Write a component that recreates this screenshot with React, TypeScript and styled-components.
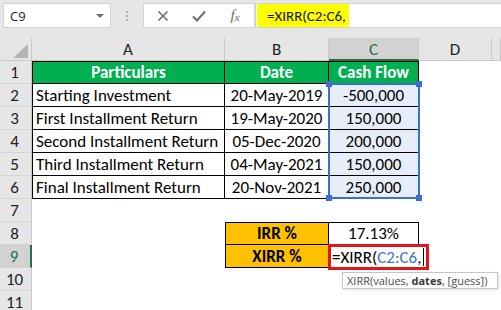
import React from 'react';
import styled, { createGlobalStyle } from 'styled-components';

const cellFont = `Calibri, Carlito, "Open Sans", "Liberation Sans", sans-serif`;
const uiFont = `"Segoe UI", "Open Sans", "Noto Sans", sans-serif`;

const GlobalStyle = createGlobalStyle`
    * { box-sizing: border-box; }
    html, body {
        margin: 0;
        padding: 0;
        background: #ffffff;
    }
    body {
        width: 501px;
        height: 310px;
        overflow: hidden;
    }
`

const Toolbar = styled.div`
    display: flex;
    align-items: flex-start;
    height: 38px;
    padding: 3px 0 0 3px;
    background: #e6e6e6;
`
const NameBox = styled.div`
    width: 108px;
    height: 25px;
    display: flex;
    align-items: center;
    justify-content: space-between;
    padding: 0 6px;
    background: #ffffff;
    border: 1px solid #d4d4d4;
    font-family: ${uiFont};
    font-size: 13px;
    color: #222;
`
const DropArrow = styled.span`
    width: 0;
    height: 0;
    border-left: 4px solid transparent;
    border-right: 4px solid transparent;
    border-top: 4px solid #707070;
`
const Grip = styled.div`
    width: 32px;
    height: 25px;
    display: flex;
    flex-direction: column;
    align-items: center;
    justify-content: center;
    gap: 2px;

    span {
        width: 2px;
        height: 2px;
        background: #b0b0b0;
    }
`
const FxButtons = styled.div`
    width: 112px;
    height: 25px;
    display: flex;
    align-items: center;
    gap: 22px;
    padding-left: 12px;
    background: #ffffff;
    border: 1px solid #d4d4d4;
    color: #6d6d6d;
`
const IconSlot = styled.span`
    width: 14px;
    display: flex;
    justify-content: center;
    align-items: center;
`
const FxLabel = styled.span`
    font-family: "Liberation Serif", serif;
    font-style: italic;
    font-size: 15px;
    color: #6d6d6d;

    sub {
        font-size: 11px;
        vertical-align: -1px;
    }
`
const FormulaInput = styled.div`
    flex: 1;
    height: 25px;
    padding-left: 1px;
    background: #ffffff;
    border: 1px solid #d4d4d4;
    border-right: none;
    display: flex;
`
const Highlight = styled.div`
    width: 92px;
    height: 100%;
    padding-left: 10px;
    display: flex;
    align-items: center;
    background: #ffff00;
    font-family: ${cellFont};
    font-size: 15px;
    color: #111;
`

const Sheet = styled.div`
    display: grid;
    grid-template-columns: 32px 193px 104px 90px 73px 1fr;
    grid-auto-rows: 23px;
    font-family: ${cellFont};
    font-size: 17px;
    color: #000;
`
const Corner = styled.div`
    position: relative;
    background: #e6e6e6;
    border-right: 1px solid #c8c8c8;
    border-bottom: 1px solid #c8c8c8;

    &::after {
        content: '';
        position: absolute;
        left: 13px;
        top: 6px;
        width: 15px;
        height: 14px;
        background: #b5b5b5;
        clip-path: polygon(100% 0, 100% 100%, 0 100%);
    }
`
const ColHead = styled.div<{ $selected?: boolean }>`
    display: flex;
    align-items: center;
    justify-content: center;
    background: ${p => (p.$selected ? '#d2d2d2' : '#e6e6e6')};
    border-right: 1px solid #c8c8c8;
    border-bottom: ${p => (p.$selected ? '2px solid #217346' : '1px solid #c8c8c8')};
    color: ${p => (p.$selected ? '#1f6b45' : '#222')};
    padding-top: ${p => (p.$selected ? '1px' : '0')};
`
const RowHead = styled.div<{ $selected?: boolean }>`
    display: flex;
    align-items: center;
    justify-content: center;
    padding-right: 2px;
    background: ${p => (p.$selected ? '#d2d2d2' : '#e6e6e6')};
    border-right: ${p => (p.$selected ? '2px solid #217346' : '1px solid #c8c8c8')};
    border-bottom: 1px solid #d4d4d4;
    color: ${p => (p.$selected ? '#1f6b45' : '#222')};
`
const Cell = styled.div<{
    $fill?: string;
    $align?: 'left' | 'center';
    $bold?: boolean;
    $ink?: string;
    $boxed?: boolean;
    $top?: boolean;
    $left?: boolean;
}>`
    position: relative;
    display: flex;
    align-items: center;
    justify-content: ${p => (p.$align === 'left' ? 'flex-start' : 'center')};
    padding: ${p => (p.$align === 'left' ? '0 0 0 3px' : '0')};
    white-space: nowrap;
    background: ${p => p.$fill || '#ffffff'};
    font-weight: ${p => (p.$bold ? 700 : 400)};
    color: ${p => p.$ink || '#000'};
    border-right: ${p => (p.$boxed ? '1px solid #000' : 'none')};
    border-bottom: ${p => (p.$boxed ? '1px solid #000' : 'none')};
    border-top: ${p => (p.$top ? '1px solid #000' : 'none')};
    border-left: ${p => (p.$left ? '1px solid #000' : 'none')};
`
// overlay drawn from the first cell of the referenced range, spans $rows rows
const RangeFrame = styled.div<{ $rows: number }>`
    position: absolute;
    left: -1px;
    top: -1px;
    width: 92px;
    height: ${p => p.$rows * 23 + 1}px;
    z-index: 1;
    border: 2px solid #3b6fcb;
    pointer-events: none;
`
const Handle = styled.span<{ $x: 'left' | 'right'; $y: 'top' | 'bottom' }>`
    position: absolute;
    width: 6px;
    height: 6px;
    background: #3b6fcb;
    ${p => p.$x}: -4px;
    ${p => p.$y}: -4px;
`
const EditCell = styled.div`
    position: relative;
    border-right: 1px solid #000;
    border-bottom: 1px solid #000;
`
const EditBox = styled.div`
    position: absolute;
    left: -1px;
    top: -1px;
    width: 101px;
    height: 26px;
    z-index: 2;
    display: flex;
    align-items: center;
    padding-left: 1px;
    background: #ffffff;
    border: 3px solid #e4141b;
    white-space: nowrap;
`
const Ref = styled.span`
    color: #3a75d0;
`
const Caret = styled.span`
    display: inline-block;
    width: 1px;
    height: 18px;
    margin-left: 2px;
    background: #000;
`
const Tooltip = styled.div`
    position: absolute;
    left: 13px;
    top: 27px;
    width: 156px;
    height: 17px;
    z-index: 3;
    display: flex;
    align-items: center;
    padding-left: 4px;
    background: #ffffff;
    border: 1px solid #c6c6c6;
    box-shadow: 1px 1px 2px rgba(0, 0, 0, 0.12);
    font-family: ${uiFont};
    font-size: 11px;
    color: #4a4a4a;
    white-space: nowrap;

    b {
        font-weight: 700;
        color: #3a3a3a;
    }
`

const rows = [
    ['Starting Investment', '20-May-2019', '-500,000'],
    ['First Installment Return', '19-May-2020', '150,000'],
    ['Second Installment Return', '05-Dec-2020', '200,000'],
    ['Third Installment Return', '04-May-2021', '150,000'],
    ['Final Installment Return', '20-Nov-2021', '250,000'],
];

const green = '#00b050';
const gold = '#ffc000';

const CrossIcon = () => (
    <svg width="12" height="12" viewBox="0 0 12 12">
        <path d="M1.5 1.5 L10.5 10.5 M10.5 1.5 L1.5 10.5" stroke="#6d6d6d" strokeWidth="1.6" fill="none" />
    </svg>
);

const CheckIcon = () => (
    <svg width="14" height="12" viewBox="0 0 14 12">
        <path d="M1 6.5 L5 10.5 L13 1.5" stroke="#6d6d6d" strokeWidth="2" fill="none" />
    </svg>
);

const EmptyRow: React.FC<{ n: number }> = ({ n }) => (
    <>
        <RowHead>{n}</RowHead>
        <Cell />
        <Cell />
        <Cell />
        <Cell />
        <Cell />
    </>
);

const App: React.FC = () => {
    return (
        <>
            <GlobalStyle />
            <Toolbar>
                <NameBox>
                    C9
                    <DropArrow />
                </NameBox>
                <Grip>
                    <span />
                    <span />
                    <span />
                </Grip>
                <FxButtons>
                    <IconSlot><CrossIcon /></IconSlot>
                    <IconSlot><CheckIcon /></IconSlot>
                    <IconSlot><FxLabel>f<sub>x</sub></FxLabel></IconSlot>
                </FxButtons>
                <FormulaInput>
                    <Highlight>=XIRR(C2:C6,</Highlight>
                </FormulaInput>
            </Toolbar>

            <Sheet>
                <Corner />
                <ColHead>A</ColHead>
                <ColHead>B</ColHead>
                <ColHead $selected>C</ColHead>
                <ColHead>D</ColHead>
                <ColHead />

                <RowHead>1</RowHead>
                <Cell $fill={green} $ink="#fff" $bold $boxed $top $left>Particulars</Cell>
                <Cell $fill={green} $ink="#fff" $bold $boxed $top>Date</Cell>
                <Cell $fill={green} $ink="#fff" $bold $boxed $top>Cash Flow</Cell>
                <Cell />
                <Cell />

                {rows.map((r, i) => (
                    <React.Fragment key={r[0]}>
                        <RowHead>{i + 2}</RowHead>
                        <Cell $align="left" $boxed $left>{r[0]}</Cell>
                        <Cell $boxed>{r[1]}</Cell>
                        <Cell $boxed $fill="#e8eef9">
                            {r[2]}
                            {i === 0 && (
                                <RangeFrame $rows={rows.length}>
                                    <Handle $x="left" $y="top" />
                                    <Handle $x="right" $y="top" />
                                    <Handle $x="left" $y="bottom" />
                                    <Handle $x="right" $y="bottom" />
                                </RangeFrame>
                            )}
                        </Cell>
                        <Cell />
                        <Cell />
                    </React.Fragment>
                ))}

                <EmptyRow n={7} />

                <RowHead>8</RowHead>
                <Cell />
                <Cell $fill={gold} $bold $boxed $top $left>IRR %</Cell>
                <Cell $boxed $top>17.13%</Cell>
                <Cell />
                <Cell />

                <RowHead $selected>9</RowHead>
                <Cell />
                <Cell $fill={gold} $bold $boxed $left>XIRR %</Cell>
                <EditCell>
                    <EditBox>
                        =XIRR(<Ref>C2:C6</Ref>,<Caret />
                    </EditBox>
                    <Tooltip>
                        XIRR(values,&nbsp;<b>dates</b>, [guess])
                    </Tooltip>
                </EditCell>
                <Cell />
                <Cell />

                <EmptyRow n={10} />
                <EmptyRow n={11} />
            </Sheet>
        </>
    );
};

export default App;
